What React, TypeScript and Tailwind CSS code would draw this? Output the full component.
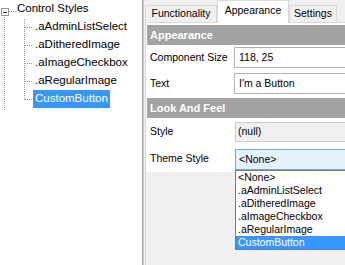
/**
 * Control Styles – tree of theme styles with a property grid
 */

const TREE_CHILDREN = ['.aAdminListSelect', '.aDitheredImage', '.aImageCheckbox', '.aRegularImage', 'CustomButton'];
const THEME_OPTIONS = ['<None>', ...TREE_CHILDREN];

function TreeLines() {
  const rowCenters = [27.5, 45.5, 63.5, 81.5, 99.5];
  return (
    <svg className="absolute left-0 top-0" width="142" height="265" shapeRendering="crispEdges">
      {/* root expander */}
      <rect x="1.5" y="8.5" width="7" height="7" fill="#ffffff" stroke="#8f9aa8" />
      <line x1="3" y1="12" x2="7" y2="12" stroke="#1e3d6b" />
      <line x1="9" y1="11.5" x2="16" y2="11.5" stroke="#9a9a9a" strokeDasharray="1 1" />
      <line x1="4.5" y1="17" x2="4.5" y2="111" stroke="#9a9a9a" strokeDasharray="1 1" />
      {/* children connectors */}
      <line x1="24.5" y1="19" x2="24.5" y2="100" stroke="#9a9a9a" strokeDasharray="1 1" />
      {rowCenters.map((y) => (
        <line key={y} x1="25" y1={y} x2="33" y2={y} stroke="#9a9a9a" strokeDasharray="1 1" />
      ))}
    </svg>
  );
}

function Tree() {
  return (
    <div className="relative w-[142px] h-full bg-white text-[11.5px] text-black">
      <TreeLines />
      <div className="relative flex flex-col">
        <div className="h-[18px] flex items-center pl-[17px]">Control Styles</div>
        {TREE_CHILDREN.map((name) => (
          <div key={name} className="h-[18px] flex items-center pl-[33px]">
            <span
              className={
                name === 'CustomButton'
                  ? 'h-[18px] flex items-center px-[2px] bg-[#3399ff] text-white'
                  : 'px-[2px]'
              }
            >
              {name}
            </span>
          </div>
        ))}
      </div>
    </div>
  );
}

function Tabs() {
  return (
    <div className="h-[22px] flex items-end pl-[1px] text-[10.5px] text-black">
      <div className="w-[72px] h-[17px] flex items-center justify-center border border-b-0 border-[#d9d9d9] bg-[#f0f0f0]">
        Functionality
      </div>
      <div className="relative z-10 -mb-[1px] w-[72px] h-[23px] flex items-center justify-center pb-[2px] border border-b-0 border-[#d9d9d9] bg-white">
        Appearance
      </div>
      <div className="w-[48px] h-[17px] flex items-center justify-center border border-b-0 border-[#d9d9d9] bg-[#f0f0f0]">
        Settings
      </div>
    </div>
  );
}

function SectionHeader({ title }: { title: string }) {
  return (
    <div className="h-[20px] flex items-center pl-[3px] bg-[#a3a3a3] text-white font-bold text-[11px]">
      {title}
    </div>
  );
}

function Row({ label, height, children }: { label: string; height: string; children: React.ReactNode }) {
  return (
    <div className={`flex items-start ${height}`}>
      <div className="w-[87px] pl-[3px] self-stretch flex items-center">{label}</div>
      <div className="flex-1 -mr-[4px]">{children}</div>
    </div>
  );
}

export default function App() {
  return (
    <div
      className="relative w-[345px] h-[265px] overflow-hidden flex bg-white"
      style={{ fontFamily: '"Liberation Sans", Arial, sans-serif' }}
    >
      <Tree />
      <div className="w-[1px] h-full bg-[#a0a0a0]" />
      <div className="w-[1px] h-full bg-[#d0d0d0]" />

      <div className="flex-1 flex flex-col bg-[#f0f0f0]">
        <Tabs />
        <div className="ml-[1px] flex-1 flex flex-col border-t border-l border-[#d9d9d9] bg-white text-[10.5px] text-black">
          <div className="pt-[2px] pl-[1px] flex flex-col bg-white">
            <SectionHeader title="Appearance" />
            <Row label="Component Size" height="h-[26px]">
              <div className="mt-[2px] h-[21px] flex items-center pl-[4px] border border-[#b4b4b4] bg-white">118, 25</div>
            </Row>
            <Row label="Text" height="h-[26px]">
              <div className="mt-[2px] h-[21px] flex items-center pl-[4px] border border-[#b4b4b4] bg-white">I'm a Button</div>
            </Row>
            <div className="mt-[1px]">
              <SectionHeader title="Look And Feel" />
            </div>
            <Row label="Style" height="h-[28px]">
              <div className="mt-[4px] ml-[1px] h-[20px] flex items-center pl-[2px] border border-[#cccccc] bg-[#f0f0f0]">(null)</div>
            </Row>
            <Row label="Theme Style" height="h-[26px]">
              <div className="mt-[3px] ml-[1px] h-[21px] flex items-center pl-[3px] border border-[#6fa8e6] bg-[#e5f1fb]">&lt;None&gt;</div>
            </Row>
          </div>
          <div className="flex-1 bg-[#f0f0f0]" />
        </div>
      </div>

      {/* open dropdown list */}
      <div className="absolute left-[235px] top-[170px] w-[120px] h-[80px] border border-[#7a7a7a] bg-white text-[10.5px] text-black">
        {THEME_OPTIONS.map((opt) => (
          <div
            key={opt}
            className={
              opt === 'CustomButton'
                ? 'h-[13px] flex items-center pl-[2px] bg-[#3399ff] text-white'
                : 'h-[13px] flex items-center pl-[2px]'
            }
          >
            {opt}
          </div>
        ))}
      </div>
    </div>
  );
}
